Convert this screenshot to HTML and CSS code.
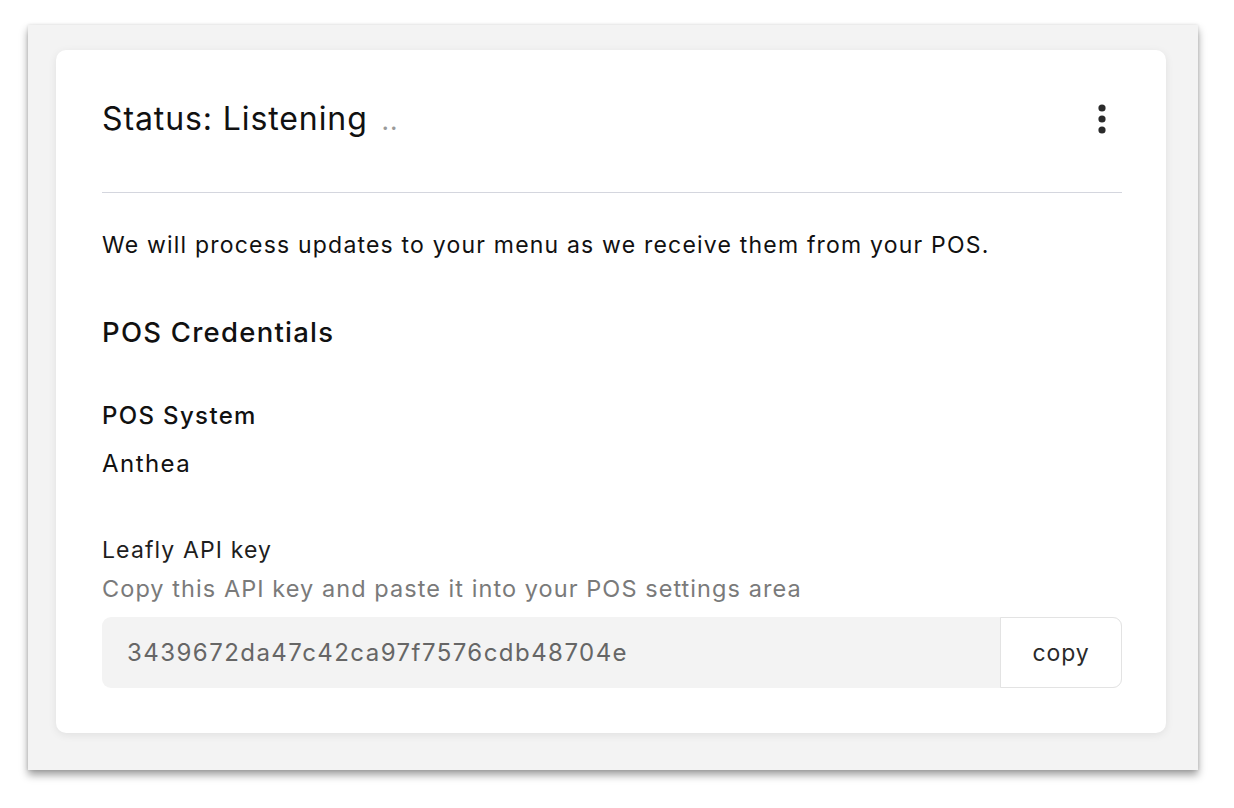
FILE: index.html
```html
<!DOCTYPE html>
<html>
<head>
<meta charset="utf-8">
<link rel="stylesheet" href="styles.css">
</head>
<body>
<div class="frame">
  <div class="card">
    <div class="card-header">
      <h1 class="status">Status: Listening <span class="dots">..</span></h1>
      <button class="kebab" aria-label="More options">
        <svg width="10" height="32" viewBox="0 0 10 32"><circle cx="5" cy="5" r="3.6" fill="#2b2b2b"/><circle cx="5" cy="16" r="3.6" fill="#2b2b2b"/><circle cx="5" cy="27" r="3.6" fill="#2b2b2b"/></svg>
      </button>
    </div>
    <hr class="divider">
    <p class="intro">We will process updates to your menu as we receive them from your POS.</p>
    <h2 class="section-title">POS Credentials</h2>
    <div class="field">
      <div class="field-label">POS System</div>
      <div class="field-value">Anthea</div>
    </div>
    <div class="field api">
      <div class="field-label light">Leafly API key</div>
      <div class="field-help">Copy this API key and paste it into your POS settings area</div>
      <div class="key-box">
        <span class="key-text">3439672da47c42ca97f7576cdb48704e</span>
        <button class="copy-btn">copy</button>
      </div>
    </div>
  </div>
</div>
</body>
</html>
```

FILE: styles.css
```css
* { box-sizing: border-box; }
html, body { margin: 0; padding: 0; background: #ffffff; }
body {
  font-family: Inter, "Noto Sans", "Liberation Sans", sans-serif;
  color: #1a1a1a;
  padding: 25px 36px 38px 28px;
}
.frame {
  background: #f3f3f3;
  padding: 25px 32px 37px 28px;
  box-shadow: 0 5px 8px rgba(0,0,0,0.38), 0 0 3px rgba(0,0,0,0.12);
}
.card {
  background: #ffffff;
  border-radius: 10px;
  box-shadow: 0 2px 8px rgba(0,0,0,0.08);
  padding: 50px 44px 45px 46px;
  display: flex;
  flex-direction: column;
}
.card-header {
  display: flex;
  align-items: center;
  justify-content: space-between;
  height: 40px;
}
.status {
  margin: 0;
  font-size: 32px;
  font-weight: 400;
  line-height: 40px;
  letter-spacing: 0.9px;
  color: #111111;
}
.dots {
  color: #9a9a9a;
  font-size: 26px;
  margin-left: 4px;
}
.kebab {
  border: 0;
  background: none;
  padding: 0;
  margin-right: 15px;
  margin-top: -2px;
  display: flex;
}
.divider {
  border: 0;
  border-top: 1px solid #d4d6de;
  margin: 52px 0 0;
}
.intro {
  margin: 37px 0 0;
  font-size: 23px;
  line-height: 30px;
  letter-spacing: 1.2px;
  color: #111111;
}
.section-title {
  margin: 56px 0 0;
  font-size: 27.5px;
  font-weight: 500;
  line-height: 32px;
  letter-spacing: 1.25px;
  color: #111111;
}
.field { margin-top: 53px; display: flex; flex-direction: column; }
.field.api { margin-top: 56px; }
.field-label {
  font-size: 24px;
  line-height: 30px;
  font-weight: 500;
  letter-spacing: 1.35px;
  color: #111111;
}
.field-label.light {
  font-size: 23px;
  font-weight: 400;
  letter-spacing: 1.12px;
  color: #1e1e1e;
}
.field-value {
  margin-top: 18px;
  font-size: 24px;
  line-height: 30px;
  letter-spacing: 1.45px;
  color: #111111;
}
.field-help {
  margin-top: 9px;
  font-size: 23.5px;
  line-height: 30px;
  letter-spacing: 1.06px;
  color: #7a7a7a;
}
.key-box {
  margin-top: 13px;
  display: flex;
  height: 71px;
  background: #f3f3f3;
  border-radius: 9px;
}
.key-text {
  flex: 1;
  display: flex;
  align-items: center;
  padding-left: 25px;
  font-size: 24px;
  letter-spacing: 1.45px;
  color: #666666;
}
.copy-btn {
  width: 122px;
  background: #ffffff;
  border: 1px solid #e3e3e3;
  border-radius: 0 9px 9px 0;
  font-family: inherit;
  font-size: 23px;
  letter-spacing: 0.9px;
  color: #2a2a2a;
  padding: 0;
}
```
